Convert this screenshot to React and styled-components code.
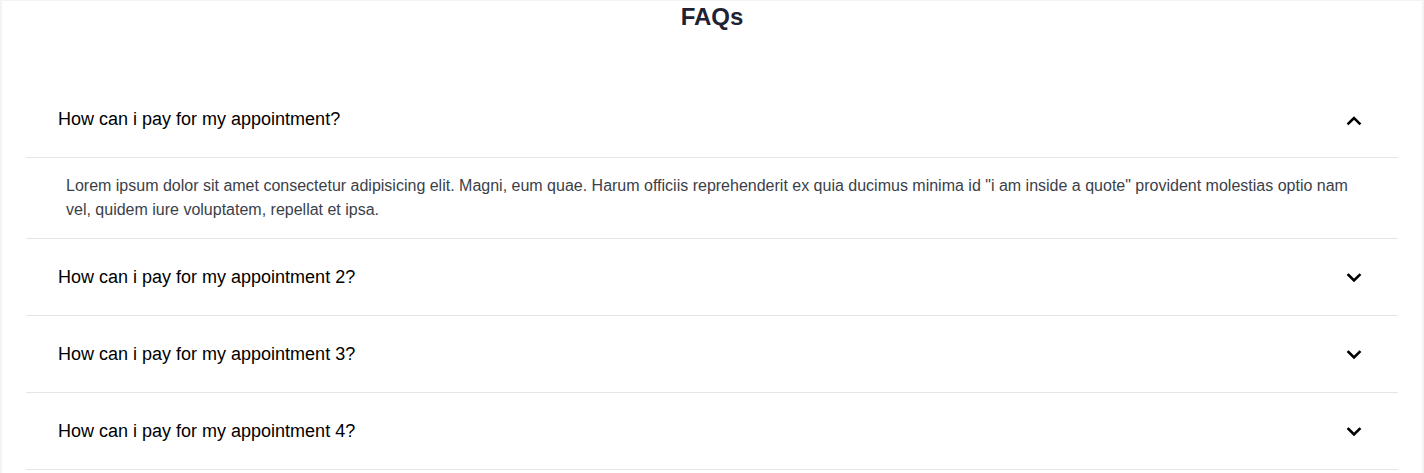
import React, { useState } from "react";
import styled, { createGlobalStyle } from "styled-components";

const Global = createGlobalStyle`
  html, body { margin: 0; padding: 0; }
  body {
    background: #f4f4f5;
    font-family: "Liberation Sans", Arial, sans-serif;
    padding: 1px 2px 0;
  }
`;

const Page = styled.main`
  background: #ffffff;
  min-height: 472px;
  padding: 0 24px;
  box-sizing: border-box;
`;

const Title = styled.h2`
  margin: 0 0 48px;
  font-size: 24px;
  line-height: 32px;
  font-weight: 700;
  text-align: center;
  color: #1f2233;
`;

const List = styled.div`
  display: flex;
  flex-direction: column;
`;

const Item = styled.div`
  border-bottom: 1px solid #e5e5e5;
`;

const Header = styled.button`
  display: flex;
  align-items: center;
  justify-content: space-between;
  width: 100%;
  padding: 24px 32px 24px 32px;
  border: none;
  background: transparent;
  cursor: pointer;
  font-family: inherit;
  font-size: 18px;
  line-height: 28px;
  color: #000;
  text-align: left;
  border-bottom: ${(p) => (p.$open ? "1px solid #e5e5e5" : "none")};
`;

const Body = styled.div`
  padding: 16px 40px 16px;
  font-size: 16px;
  line-height: 24px;
  color: #3b3f4a;
`;

const Chevron = ({ up }) => (
  <svg width="24" height="24" viewBox="0 0 24 24" fill="none" style={{ marginTop: up ? 1 : 2 }}>
    <polyline
      points={up ? "6.5 15.5 12 10 17.5 15.5" : "6.5 9 12 14.5 17.5 9"}
      stroke="#000"
      strokeWidth="2.6"
      strokeLinecap="square"
      strokeLinejoin="miter"
    />
  </svg>
);

const faqs = [
  "How can i pay for my appointment?",
  "How can i pay for my appointment 2?",
  "How can i pay for my appointment 3?",
  "How can i pay for my appointment 4?",
];

const answer =
  'Lorem ipsum dolor sit amet consectetur adipisicing elit. Magni, eum quae. Harum officiis reprehenderit ex quia ducimus minima id "i am inside a quote" provident molestias optio nam vel, quidem iure voluptatem, repellat et ipsa.';

export default function App() {
  const [open, setOpen] = useState(0);
  return (
    <>
      <Global />
      <Page>
        <Title>FAQs</Title>
        <List>
          {faqs.map((q, i) => (
            <Item key={q}>
              <Header $open={open === i} onClick={() => setOpen(open === i ? -1 : i)}>
                <span>{q}</span>
                <Chevron up={open === i} />
              </Header>
              {open === i && <Body>{answer}</Body>}
            </Item>
          ))}
        </List>
      </Page>
    </>
  );
}
